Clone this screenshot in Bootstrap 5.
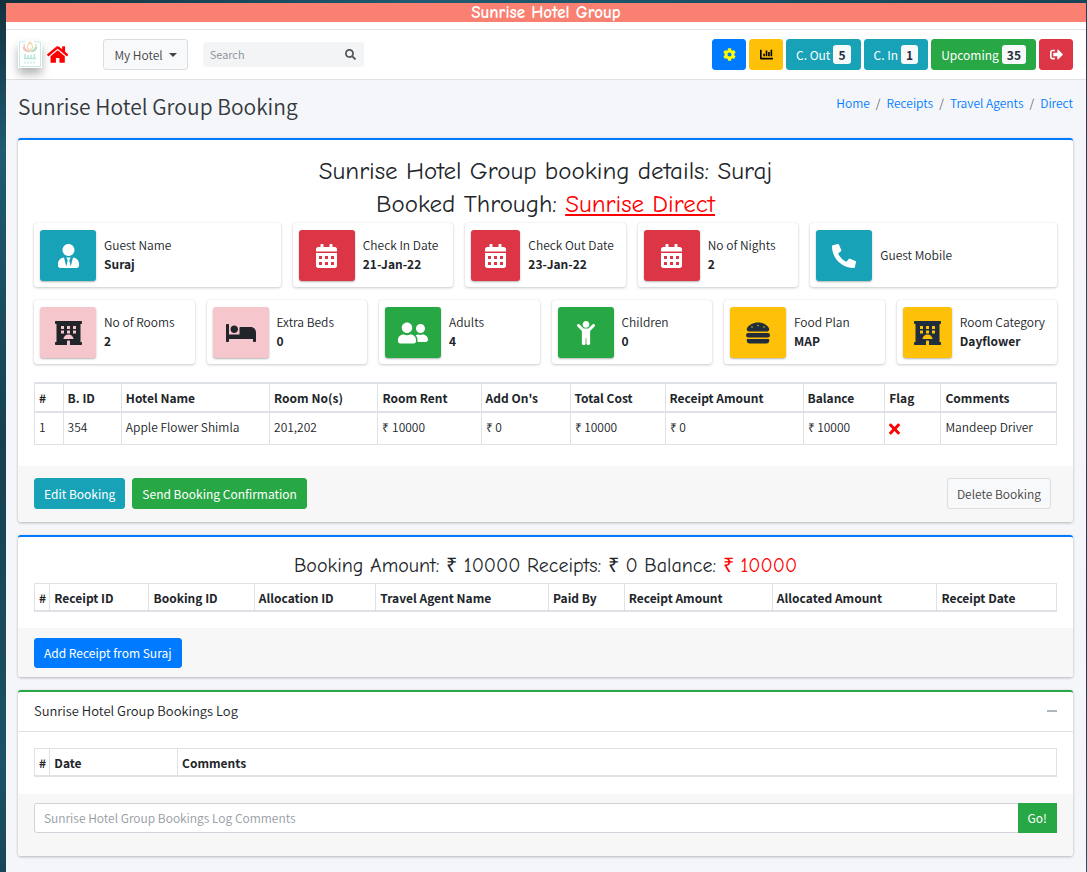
<!DOCTYPE html>
<html lang="en">
<head>
<meta charset="utf-8">
<meta name="viewport" content="width=device-width, initial-scale=1">
<title>Sunrise Hotel Group Booking</title>
<link href="https://cdn.jsdelivr.net/npm/bootstrap@5.3.0/dist/css/bootstrap.min.css" rel="stylesheet">
<style>
:root{--teal:#17a2b8;--green:#28a745;--red:#dc3545;--amber:#ffc107;--blue:#007bff;--line:#dee2e6}
body{font-family:"Source Sans Pro","Noto Sans CJK SC",sans-serif;font-size:12px;line-height:19px;font-weight:350;color:#212529;
  background:linear-gradient(160deg,#12303d,#1f5b72 12%,#16404f 35%,#1c5266 60%,#14394a 80%,#1d5569);padding:3px 1px 0 6px;min-height:100vh}
.fancy{font-family:"Comic Sans MS","Comic Neue",cursive}
.page-shell{background:#f4f6f9;min-height:calc(100vh - 3px)}
.ribbon{background:#fa8072;color:#fff;font-size:17px;font-weight:600;height:19px;line-height:20px;overflow:hidden}
.topbar{background:#fff;border-top:1px solid var(--line);border-bottom:1px solid var(--line);padding:0 13px 0 12px;height:51px;margin-top:7px}
.topbar-wrap{background:#fff;overflow:hidden}
.ico{fill:currentColor;height:1em;width:auto;display:block}
.brand-logo{width:24px;height:27px;box-shadow:0 6px 10px rgba(0,0,0,.3)}
.home-link{color:red;font-size:19px;margin-left:5px}
.btn{--bs-btn-font-size:12px;--bs-btn-line-height:19px;--bs-btn-padding-x:9px;--bs-btn-padding-y:5px;--bs-btn-border-radius:3px;--bs-btn-color:#fff;--bs-btn-hover-color:#fff;font-weight:400}
.btn-teal{background:var(--teal);border-color:var(--teal)}
.btn-green{background:var(--green);border-color:var(--green)}
.btn-red{background:var(--red);border-color:var(--red)}
.btn-amber{background:var(--amber);border-color:var(--amber);color:#000}
.btn-blue{background:var(--blue);border-color:var(--blue)}
.btn-plain{background:#f8f9fa;border-color:#ddd;color:#444;font-weight:350}
.top-btn{height:31px;display:flex;align-items:center;gap:3px}
.top-btn.square{width:34px;padding:0;justify-content:center;font-size:13px}
.count{background:#f8f9fa;color:#1f2d3d;font-size:12px;font-weight:700;line-height:19px;padding:0 5px;border-radius:3px}
.menu-btn{padding:0 10px}
.dropdown-toggle::after{border-top-width:4px;border-left-width:4px;border-right-width:4px}
.menu-wrap{margin-left:35px}
.search-box{width:161px;height:25px;margin-left:15px;background:#f2f4f6;border-radius:3px}
.search-box .ico{color:#555;font-size:11px}
.search-box input{font-size:11px;font-weight:350;background:none;border:0;padding:0 7px;outline:0;min-width:0}
.search-box input::placeholder{color:#868e96}
.top-actions{gap:3px}
.content-area{padding:0 13px 2px 12px}
.page-head{padding:13px 0 19px}
.page-head nav{line-height:20px}
.page-title{font-size:21px;line-height:26px;font-weight:350;color:#343a40}
.breadcrumb{--bs-breadcrumb-item-padding-x:6px;--bs-breadcrumb-font-size:12px}
.breadcrumb a{color:var(--blue);text-decoration:none}
.panel{background:#fff;border-top:2px solid var(--blue);border-radius:3px;box-shadow:0 0 1px rgba(0,0,0,.13),0 1px 3px rgba(0,0,0,.25);margin-bottom:13px}
.panel.log{border-color:var(--green)}
.panel-foot{background:#f7f7f7;padding:10px 16px;border-radius:0 0 3px 3px}
.panel-body{padding:14px 16px 0}
.headline{font-size:25px;line-height:33px;padding-bottom:3px}
.summary{font-size:20px;line-height:28px;padding-bottom:3px}
.receipt-body{padding:15px 16px 16px}
.receipt-foot{padding-bottom:9px}
.receipt-foot .btn{--bs-btn-line-height:18px}
.agent,.due{color:red}
.tiles{--bs-gutter-x:12px;--bs-gutter-y:13px}
.tile{height:64px;background:#fff;border-radius:3px;box-shadow:0 0 1px rgba(0,0,0,.13),0 1px 3px rgba(0,0,0,.2);padding:7px 6px 6px;display:flex}
.tile-icon{flex:0 1 56px;min-width:0;border-radius:3px;color:#fff;display:flex;align-items:center;justify-content:center;font-size:24px;box-shadow:0 1px 2px rgba(0,0,0,.3)}
.tile-text{padding:0 6px 0 8px;margin-top:-3px;display:flex;flex-direction:column;justify-content:center;white-space:nowrap}
.pink{background:#f5c6cb;color:#212529}
.navy{color:#1f2d3d}
.grid-table{table-layout:fixed;width:100%;margin:0;border:1px solid var(--line);color:#212529}
.grid-table th,.grid-table td{border:1px solid var(--line);padding:4px;line-height:19px;white-space:nowrap;vertical-align:top}
.grid-table thead th{border-bottom:2px solid var(--line)}
.grid-table.bookings{margin:18px 0 21px}
.bookings thead th{border-top-width:2px}
.bookings td{height:32px}
.bookings .ico{margin-top:4px;color:red;font-size:16px}
.receipts thead th,.history thead th{padding:4px 4px 3px}
.bookings th:nth-child(1){width:2.8%}.bookings th:nth-child(2){width:5.7%}.bookings th:nth-child(3){width:14.5%}.bookings th:nth-child(4){width:10.6%}.bookings th:nth-child(5){width:10.1%}.bookings th:nth-child(6){width:8.7%}.bookings th:nth-child(7){width:9.3%}.bookings th:nth-child(8){width:13.5%}.bookings th:nth-child(9){width:8%}.bookings th:nth-child(10){width:5.5%}
.receipts th:nth-child(1),.history th:nth-child(1){width:1.5%}
.receipts th:nth-child(2){width:9.7%}.receipts th:nth-child(3){width:10.3%}.receipts th:nth-child(4){width:11.9%}.receipts th:nth-child(5){width:16.9%}.receipts th:nth-child(6){width:7.4%}.receipts th:nth-child(7){width:14.5%}.receipts th:nth-child(8){width:16.1%}
.history th:nth-child(2){width:12.5%}
.booking-foot{gap:7px;padding:12px 22px 13px 16px}
.log-head{border-bottom:1px solid #dfe1e4;padding:9px 16px 10px}
.log-head h2{font-size:13px;line-height:20px;font-weight:350}
.log-body{padding:16px 16px 17px}
.log-foot{padding:9px 16px 23px}
.log-foot .btn,.log-input{font-size:12px;line-height:18px}
.log-input{font-weight:350;padding:5px 9px;border-color:#ced4da;border-radius:3px}
.log-input::placeholder{color:#939ba2}
.collapse-btn{border:0;padding:0;width:10px;height:2px;background:#adb5bd}
</style>
</head>
<body>
<svg class="d-none" xmlns="http://www.w3.org/2000/svg">
<symbol id="calendar" viewBox="0 0 448 512"><path fill-rule="evenodd" d="M0 464c0 26.500 21.500 48 48 48h352c26.500 0 48-21.500 48-48V192H0zM64 256h64v64H64zM192 256h64v64h-64zM320 256h64v64h-64zM64 384h64v64H64zM192 384h64v64h-64zM320 384h64v64h-64zM400 64h-48V16c0-8.800-7.200-16-16-16h-32c-8.800 0-16 7.200-16 16v48H160V16c0-8.800-7.200-16-16-16h-32c-8.800 0-16 7.200-16 16v48H48C21.500 64 0 85.500 0 112v48h448v-48c0-26.500-21.500-48-48-48z"/></symbol>
<symbol id="hotel" viewBox="0 0 576 512"><path fill-rule="evenodd" d="M560 64c8.840 0 16-7.160 16-16V16c0-8.840-7.160-16-16-16H16C7.160 0 0 7.160 0 16v32c0 8.840 7.160 16 16 16h16v384H16c-8.840 0-16 7.160-16 16v32c0 8.840 7.160 16 16 16h240v-80c0-8.800 7.200-16 16-16h32c8.800 0 16 7.200 16 16v80h240c8.840 0 16-7.160 16-16v-32c0-8.840-7.160-16-16-16h-16V64zM128 109h64v64h-64zM256 109h64v64h-64zM384 109h64v64h-64zM128 205h64v64h-64zM256 205h64v64h-64zM384 205h64v64h-64zM179 384c7-54 53-96 109-96s102 42 109 96z"/></symbol>
</svg>
<div class="page-shell">
  <div class="ribbon fancy text-center">Sunrise Hotel Group</div>
  <div class="topbar-wrap">
  <nav class="topbar d-flex align-items-center" aria-label="Main">
    <svg class="brand-logo" viewBox="0 0 24 27" aria-hidden="true"><rect width="24" height="27" fill="#fff"/><path d="M8 1H1.500v24.500h21V1H16" fill="none" stroke="#c4ebe4"/><g fill="none" stroke-width="1.200"><path d="M12 1c-4 4-3 7 0 8 3-1 4-4 0-8z" stroke="#f6d3a8"/><path d="M6 3c0 5 2 7 6 7M5 6c1 4 4 5 7 4" stroke="#f5c1bd"/><path d="M18 3c0 5-2 7-6 7M19 6c-1 4-4 5-7 4" stroke="#b8ddcb"/></g><path d="M7 13v4M10 14v3M13 14v3M16.500 13v4M6 17.500h12" stroke="#b4e5dd" stroke-width="1.500"/><path d="M6 21.500h12" stroke="#d5efeb" stroke-width="2" stroke-dasharray="2 1"/></svg>
    <a class="home-link" href="#" aria-label="Home"><svg class="ico" viewBox="0 0 576 512"><path d="M280.370 148.260L96 300.110V464a16 16 0 0 0 16 16l112.060-.290a16 16 0 0 0 15.920-16V368a16 16 0 0 1 16-16h64a16 16 0 0 1 16 16v95.640a16 16 0 0 0 16 16.050L464 480a16 16 0 0 0 16-16V300L295.670 148.260a12.190 12.190 0 0 0-15.300 0zM571.600 251.470L488 182.560V44.050a12 12 0 0 0-12-12h-56a12 12 0 0 0-12 12v72.610L318.470 43a48 48 0 0 0-61 0L4.340 251.470a12 12 0 0 0-1.600 16.900l25.500 31A12 12 0 0 0 45.150 301l235.220-193.740a12.190 12.190 0 0 1 15.300 0L530.900 301a12 12 0 0 0 16.900-1.600l25.500-31a12 12 0 0 0-1.700-16.930z"/></svg></a>
    <div class="dropdown menu-wrap"><button class="btn btn-plain dropdown-toggle top-btn menu-btn" type="button" data-bs-toggle="dropdown">My Hotel</button>
      <ul class="dropdown-menu"><li><a class="dropdown-item" href="#">My Hotel</a></li></ul></div>
    <form class="search-box d-flex align-items-center" role="search"><input class="flex-grow-1" type="search" placeholder="Search" aria-label="Search"><button class="btn py-0 px-2 border-0" type="submit" aria-label="Search"><svg class="ico" viewBox="0 0 512 512"><path d="M505 442.700L405.300 343c-4.500-4.500-10.600-7-17-7H372c27.600-35.300 44-79.700 44-128C416 93.100 322.900 0 208 0S0 93.100 0 208s93.100 208 208 208c48.300 0 92.700-16.400 128-44v16.300c0 6.400 2.500 12.500 7 17l99.700 99.700c9.400 9.400 24.600 9.400 33.900 0l28.300-28.300c9.400-9.400 9.400-24.600.1-34zM208 336c-70.700 0-128-57.200-128-128 0-70.700 57.200-128 128-128 70.700 0 128 57.200 128 128 0 70.700-57.200 128-128 128z"/></svg></button></form>
    <div class="top-actions d-flex ms-auto">
      <button class="btn btn-blue top-btn square" type="button" aria-label="Settings"><svg class="ico" viewBox="0 0 512 512" style="color:#ff0"><path d="M487.400 315.700l-42.600-24.600c4.300-23.200 4.300-47 0-70.200l42.600-24.600c4.900-2.800 7.100-8.600 5.500-14-11.100-35.600-30-67.800-54.700-94.600-3.800-4.100-10-5.100-14.800-2.300L380.800 110c-17.900-15.400-38.500-27.300-60.800-35.100V25.800c0-5.600-3.900-10.500-9.400-11.700-36.700-8.200-74.300-7.800-109.200 0-5.500 1.200-9.400 6.100-9.400 11.700V75c-22.200 7.900-42.800 19.800-60.800 35.100L88.700 85.500c-4.900-2.800-11-1.900-14.800 2.300-24.700 26.700-43.600 58.900-54.700 94.600-1.700 5.400.6 11.200 5.500 14L67.300 221c-4.300 23.200-4.300 47 0 70.200l-42.600 24.600c-4.900 2.800-7.100 8.600-5.500 14 11.100 35.600 30 67.800 54.700 94.600 3.800 4.100 10 5.100 14.800 2.300l42.600-24.600c17.900 15.400 38.500 27.300 60.800 35.100v49.200c0 5.600 3.900 10.500 9.400 11.700 36.700 8.200 74.300 7.800 109.200 0 5.500-1.200 9.400-6.100 9.400-11.700v-49.200c22.200-7.900 42.800-19.800 60.800-35.100l42.600 24.600c4.900 2.800 11 1.900 14.800-2.300 24.700-26.700 43.600-58.900 54.700-94.600 1.500-5.500-.7-11.300-5.600-14.100zM256 336c-44.100 0-80-35.900-80-80s35.900-80 80-80 80 35.900 80 80-35.900 80-80 80z"/></svg></button>
      <button class="btn btn-amber top-btn square" type="button" aria-label="Reports"><svg class="ico" viewBox="0 0 512 512"><path d="M320 160h64v160h-64zM416 64h64v256h-64zM128 224h64v96h-64zM224 96h64v224h-64zM496 384H64V80c0-8.800-7.200-16-16-16H16C7.200 64 0 71.200 0 80v336c0 17.700 14.300 32 32 32h464c8.800 0 16-7.200 16-16v-32c0-8.800-7.200-16-16-16z"/></svg></button>
      <button class="btn btn-teal top-btn" type="button">C. Out <span class="count">5</span></button>
      <button class="btn btn-teal top-btn" type="button">C. In <span class="count">1</span></button>
      <button class="btn btn-green top-btn" type="button">Upcoming <span class="count">35</span></button>
      <button class="btn btn-red top-btn square" type="button" aria-label="Sign out"><svg class="ico" viewBox="0 0 512 512"><path d="M497 273L329 441c-15 15-41 4.500-41-17v-96H152c-13.300 0-24-10.700-24-24v-96c0-13.300 10.700-24 24-24h136V88c0-21.400 25.900-32 41-17l168 168c9.300 9.400 9.300 24.600 0 34zM192 436v-40c0-6.600-5.400-12-12-12H96c-17.700 0-32-14.300-32-32V160c0-17.700 14.300-32 32-32h84c6.600 0 12-5.400 12-12V76c0-6.600-5.400-12-12-12H96c-53 0-96 43-96 96v192c0 53 43 96 96 96h84c6.600 0 12-5.400 12-12z"/></svg></button>
    </div>
  </nav>
  </div>
  <main class="content-area">
    <header class="d-flex justify-content-between align-items-start page-head">
      <h1 class="page-title mb-0">Sunrise Hotel Group Booking</h1>
      <nav aria-label="breadcrumb"><ol class="breadcrumb mb-0"><li class="breadcrumb-item"><a href="#">Home</a></li><li class="breadcrumb-item"><a href="#">Receipts</a></li><li class="breadcrumb-item"><a href="#">Travel Agents</a></li><li class="breadcrumb-item"><a href="#">Direct</a></li></ol></nav>
    </header>

    <section class="panel">
      <div class="panel-body">
        <h2 class="headline fancy fw-normal text-center mb-0">Sunrise Hotel Group booking details: Suraj<br>Booked Through: <a class="agent" href="#">Sunrise Direct</a></h2>
        <div class="row tiles">
          <div class="col-3"><div class="tile"><span class="tile-icon btn-teal"><svg class="ico" viewBox="0 0 448 512"><path d="M224 256c70.700 0 128-57.300 128-128S294.700 0 224 0 96 57.300 96 128s57.300 128 128 128zm95.800 32.600L272 480l-32-136 32-56h-96l32 56-32 136-47.800-191.400C56.900 292 0 350.300 0 422.400V464c0 26.500 21.500 48 48 48h352c26.500 0 48-21.500 48-48v-41.600c0-72.100-56.900-130.400-128.200-133.800z"/></svg></span><div class="tile-text"><span>Guest Name</span><b>Suraj</b></div></div></div>
          <div class="col-2"><div class="tile"><span class="tile-icon btn-red"><svg class="ico" viewBox="0 0 448 512"><use href="#calendar"/></svg></span><div class="tile-text"><span>Check In Date</span><b>21-Jan-22</b></div></div></div>
          <div class="col-2"><div class="tile"><span class="tile-icon btn-red"><svg class="ico" viewBox="0 0 448 512"><use href="#calendar"/></svg></span><div class="tile-text"><span>Check Out Date</span><b>23-Jan-22</b></div></div></div>
          <div class="col-2"><div class="tile"><span class="tile-icon btn-red"><svg class="ico" viewBox="0 0 448 512"><use href="#calendar"/></svg></span><div class="tile-text"><span>No of Nights</span><b>2</b></div></div></div>
          <div class="col-3"><div class="tile"><span class="tile-icon btn-teal"><svg class="ico" viewBox="0 0 512 512"><path d="M497.390 361.800l-112-48a24 24 0 0 0-28 6.900l-49.600 60.600A370.660 370.660 0 0 1 130.600 204.110l60.600-49.600a23.940 23.940 0 0 0 6.900-28l-48-112A24.160 24.160 0 0 0 122.600.610l-104 24A24 24 0 0 0 0 48c0 256.500 207.900 464 464 464a24 24 0 0 0 23.400-18.600l24-104a24.290 24.290 0 0 0-14.010-27.600z"/></svg></span><div class="tile-text"><span>Guest Mobile</span></div></div></div>
          <div class="col-2"><div class="tile"><span class="tile-icon pink"><svg class="ico" viewBox="0 0 576 512"><use href="#hotel"/></svg></span><div class="tile-text"><span>No of Rooms</span><b>2</b></div></div></div>
          <div class="col-2"><div class="tile"><span class="tile-icon pink"><svg class="ico" viewBox="0 0 640 512"><path d="M176 256c44.110 0 80-35.890 80-80s-35.890-80-80-80-80 35.890-80 80 35.890 80 80 80zm352-128H304c-8.840 0-16 7.160-16 16v144H64V80c0-8.840-7.160-16-16-16H16C7.160 64 0 71.160 0 80v352c0 8.840 7.160 16 16 16h32c8.840 0 16-7.160 16-16v-48h512v48c0 8.840 7.160 16 16 16h32c8.840 0 16-7.160 16-16V240c0-61.860-50.140-112-112-112z"/></svg></span><div class="tile-text"><span>Extra Beds</span><b>0</b></div></div></div>
          <div class="col-2"><div class="tile"><span class="tile-icon btn-green"><svg class="ico" viewBox="0 0 640 512"><path d="M192 256c61.900 0 112-50.100 112-112S253.900 32 192 32 80 82.100 80 144s50.100 112 112 112zm76.800 32h-8.300c-20.800 10-43.900 16-68.500 16s-47.600-6-68.500-16h-8.300C51.600 288 0 339.600 0 403.200V432c0 26.500 21.500 48 48 48h288c26.500 0 48-21.500 48-48v-28.800c0-63.600-51.600-115.200-115.200-115.200zM480 256c53 0 96-43 96-96s-43-96-96-96-96 43-96 96 43 96 96 96zm48 32h-3.800c-13.900 4.800-28.600 8-44.200 8s-30.300-3.200-44.200-8H432c-20.400 0-39.200 5.900-55.700 15.400 24.400 26.300 39.700 61.200 39.700 99.800v38.400c0 2.200-.5 4.300-.6 6.400H592c26.500 0 48-21.500 48-48 0-61.900-50.100-112-112-112z"/></svg></span><div class="tile-text"><span>Adults</span><b>4</b></div></div></div>
          <div class="col-2"><div class="tile"><span class="tile-icon btn-green"><svg class="ico" viewBox="0 0 384 512"><path d="M120 72c0-39.765 32.235-72 72-72s72 32.235 72 72c0 39.764-32.235 72-72 72s-72-32.236-72-72zm254.627 1.373c-12.496-12.497-32.758-12.497-45.254 0L242.745 160H141.254L54.627 73.373c-12.496-12.497-32.758-12.497-45.254 0-12.497 12.497-12.497 32.758 0 45.255L104 213.254V480c0 17.673 14.327 32 32 32h16c17.673 0 32-14.327 32-32V368h16v112c0 17.673 14.327 32 32 32h16c17.673 0 32-14.327 32-32V213.254l94.627-94.626c12.497-12.497 12.497-32.757 0-45.255z"/></svg></span><div class="tile-text"><span>Children</span><b>0</b></div></div></div>
          <div class="col-2"><div class="tile"><span class="tile-icon btn-amber navy"><svg class="ico" viewBox="0 0 512 512"><path d="M464 256H48a48 48 0 0 0 0 96h416a48 48 0 0 0 0-96zm16 128H32a16 16 0 0 0-16 16v16a64 64 0 0 0 64 64h352a64 64 0 0 0 64-64v-16a16 16 0 0 0-16-16zM58.640 224h394.720c34.570 0 54.620-43.900 34.820-75.880C448 83.200 359.550 32.100 256 32c-103.540.1-192 51.200-232.180 116.110C4 180.090 24.070 224 58.640 224zM384 112a16 16 0 1 1-16 16 16 16 0 0 1 16-16zM256 80a16 16 0 1 1-16 16 16 16 0 0 1 16-16zm-128 32a16 16 0 1 1-16 16 16 16 0 0 1 16-16z"/></svg></span><div class="tile-text"><span>Food Plan</span><b>MAP</b></div></div></div>
          <div class="col-2"><div class="tile"><span class="tile-icon btn-amber navy"><svg class="ico" viewBox="0 0 576 512"><use href="#hotel"/></svg></span><div class="tile-text"><span>Room Category</span><b>Dayflower</b></div></div></div>
        </div>
        <table class="grid-table bookings">
          <thead><tr><th>#</th><th>B. ID</th><th>Hotel Name</th><th>Room No(s)</th><th>Room Rent</th><th>Add On's</th><th>Total Cost</th><th>Receipt Amount</th><th>Balance</th><th>Flag</th><th>Comments</th></tr></thead>
          <tbody><tr><td>1</td><td>354</td><td>Apple Flower Shimla</td><td>201,202</td><td>₹ 10000</td><td>₹ 0</td><td>₹ 10000</td><td>₹ 0</td><td>₹ 10000</td><td><svg class="ico" viewBox="0 0 352 512" role="img" aria-label="No"><path d="M242.720 256l100.070-100.070c12.280-12.280 12.280-32.190 0-44.480l-22.240-22.240c-12.280-12.280-32.190-12.280-44.480 0L176 189.280 75.930 89.210c-12.280-12.280-32.190-12.280-44.480 0L9.210 111.450c-12.280 12.280-12.280 32.190 0 44.480L109.280 256 9.210 356.070c-12.280 12.280-12.280 32.190 0 44.480l22.240 22.240c12.280 12.280 32.200 12.280 44.480 0L176 322.720l100.070 100.070c12.280 12.280 32.200 12.280 44.480 0l22.240-22.240c12.280-12.280 12.280-32.190 0-44.480L242.720 256z"/></svg></td><td>Mandeep Driver</td></tr></tbody>
        </table>
      </div>
      <div class="panel-foot booking-foot d-flex">
        <button class="btn btn-teal" type="button">Edit Booking</button>
        <button class="btn btn-green" type="button">Send Booking Confirmation</button>
        <button class="btn btn-plain ms-auto" type="button">Delete Booking</button>
      </div>
    </section>

    <section class="panel">
      <div class="receipt-body">
        <h2 class="summary fancy fw-normal text-center mb-0">Booking Amount: ₹ 10000 Receipts: ₹ 0 Balance: <span class="due">₹ 10000</span></h2>
        <table class="grid-table receipts"><thead><tr><th>#</th><th>Receipt ID</th><th>Booking ID</th><th>Allocation ID</th><th>Travel Agent Name</th><th>Paid By</th><th>Receipt Amount</th><th>Allocated Amount</th><th>Receipt Date</th></tr></thead></table>
      </div>
      <div class="panel-foot receipt-foot"><button class="btn btn-blue" type="button">Add Receipt from Suraj</button></div>
    </section>

    <section class="panel log">
      <div class="log-head d-flex justify-content-between align-items-center"><h2 class="mb-0">Sunrise Hotel Group Bookings Log</h2><button class="collapse-btn" type="button" aria-label="Collapse"></button></div>
      <div class="log-body"><table class="grid-table history"><thead><tr><th>#</th><th>Date</th><th>Comments</th></tr></thead></table></div>
      <form class="panel-foot log-foot"><div class="input-group"><input class="form-control log-input" type="text" placeholder="Sunrise Hotel Group Bookings Log Comments" aria-label="Sunrise Hotel Group Bookings Log Comments"><button class="btn btn-green rounded-0" type="submit">Go!</button></div></form>
    </section>
  </main>
</div>
<script src="https://cdn.jsdelivr.net/npm/bootstrap@5.3.0/dist/js/bootstrap.bundle.min.js"></script>
</body>
</html>
